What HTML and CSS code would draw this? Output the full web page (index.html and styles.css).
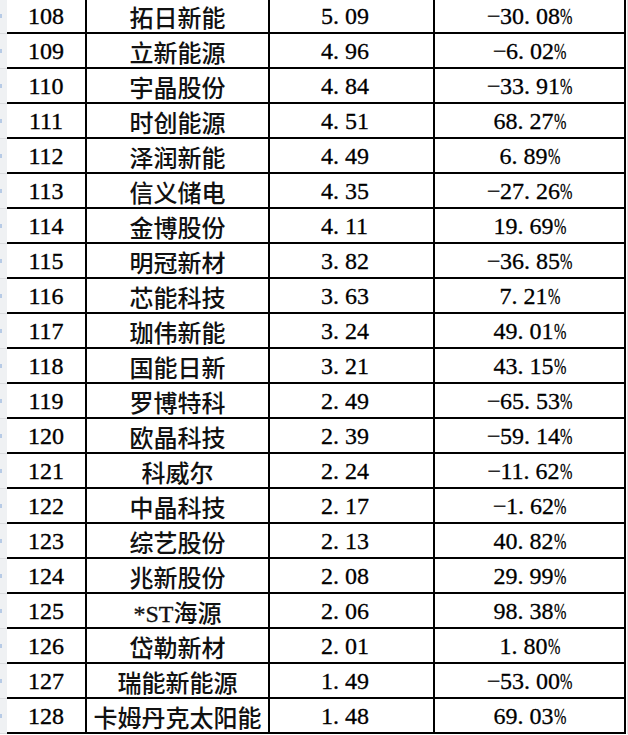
FILE: index.html
```html
<!DOCTYPE html>
<html lang="zh-CN">
<head>
<meta charset="utf-8">
<title>表格</title>
<link rel="stylesheet" href="styles.css">
</head>
<body>
<div class="sheet">
  <div class="row"><div class="hdr"></div><div class="c rank">108</div><div class="c name">拓日新能</div><div class="c val">5<i class="d">.</i>09</div><div class="c pct"><i class="m">−</i>30<i class="d">.</i>08<i class="p">%</i></div></div>
  <div class="row"><div class="hdr"></div><div class="c rank">109</div><div class="c name">立新能源</div><div class="c val">4<i class="d">.</i>96</div><div class="c pct"><i class="m">−</i>6<i class="d">.</i>02<i class="p">%</i></div></div>
  <div class="row"><div class="hdr"></div><div class="c rank">110</div><div class="c name">宇晶股份</div><div class="c val">4<i class="d">.</i>84</div><div class="c pct"><i class="m">−</i>33<i class="d">.</i>91<i class="p">%</i></div></div>
  <div class="row"><div class="hdr"></div><div class="c rank">111</div><div class="c name">时创能源</div><div class="c val">4<i class="d">.</i>51</div><div class="c pct">68<i class="d">.</i>27<i class="p">%</i></div></div>
  <div class="row"><div class="hdr"></div><div class="c rank">112</div><div class="c name">泽润新能</div><div class="c val">4<i class="d">.</i>49</div><div class="c pct">6<i class="d">.</i>89<i class="p">%</i></div></div>
  <div class="row"><div class="hdr"></div><div class="c rank">113</div><div class="c name">信义储电</div><div class="c val">4<i class="d">.</i>35</div><div class="c pct"><i class="m">−</i>27<i class="d">.</i>26<i class="p">%</i></div></div>
  <div class="row"><div class="hdr"></div><div class="c rank">114</div><div class="c name">金博股份</div><div class="c val">4<i class="d">.</i>11</div><div class="c pct">19<i class="d">.</i>69<i class="p">%</i></div></div>
  <div class="row"><div class="hdr"></div><div class="c rank">115</div><div class="c name">明冠新材</div><div class="c val">3<i class="d">.</i>82</div><div class="c pct"><i class="m">−</i>36<i class="d">.</i>85<i class="p">%</i></div></div>
  <div class="row"><div class="hdr"></div><div class="c rank">116</div><div class="c name">芯能科技</div><div class="c val">3<i class="d">.</i>63</div><div class="c pct">7<i class="d">.</i>21<i class="p">%</i></div></div>
  <div class="row"><div class="hdr"></div><div class="c rank">117</div><div class="c name">珈伟新能</div><div class="c val">3<i class="d">.</i>24</div><div class="c pct">49<i class="d">.</i>01<i class="p">%</i></div></div>
  <div class="row"><div class="hdr"></div><div class="c rank">118</div><div class="c name">国能日新</div><div class="c val">3<i class="d">.</i>21</div><div class="c pct">43<i class="d">.</i>15<i class="p">%</i></div></div>
  <div class="row"><div class="hdr"></div><div class="c rank">119</div><div class="c name">罗博特科</div><div class="c val">2<i class="d">.</i>49</div><div class="c pct"><i class="m">−</i>65<i class="d">.</i>53<i class="p">%</i></div></div>
  <div class="row"><div class="hdr"></div><div class="c rank">120</div><div class="c name">欧晶科技</div><div class="c val">2<i class="d">.</i>39</div><div class="c pct"><i class="m">−</i>59<i class="d">.</i>14<i class="p">%</i></div></div>
  <div class="row"><div class="hdr"></div><div class="c rank">121</div><div class="c name">科威尔</div><div class="c val">2<i class="d">.</i>24</div><div class="c pct"><i class="m">−</i>11<i class="d">.</i>62<i class="p">%</i></div></div>
  <div class="row"><div class="hdr"></div><div class="c rank">122</div><div class="c name">中晶科技</div><div class="c val">2<i class="d">.</i>17</div><div class="c pct"><i class="m">−</i>1<i class="d">.</i>62<i class="p">%</i></div></div>
  <div class="row"><div class="hdr"></div><div class="c rank">123</div><div class="c name">综艺股份</div><div class="c val">2<i class="d">.</i>13</div><div class="c pct">40<i class="d">.</i>82<i class="p">%</i></div></div>
  <div class="row"><div class="hdr"></div><div class="c rank">124</div><div class="c name">兆新股份</div><div class="c val">2<i class="d">.</i>08</div><div class="c pct">29<i class="d">.</i>99<i class="p">%</i></div></div>
  <div class="row"><div class="hdr"></div><div class="c rank">125</div><div class="c name"><span class="lat">*ST</span>海源</div><div class="c val">2<i class="d">.</i>06</div><div class="c pct">98<i class="d">.</i>38<i class="p">%</i></div></div>
  <div class="row"><div class="hdr"></div><div class="c rank">126</div><div class="c name">岱勒新材</div><div class="c val">2<i class="d">.</i>01</div><div class="c pct">1<i class="d">.</i>80<i class="p">%</i></div></div>
  <div class="row"><div class="hdr"></div><div class="c rank">127</div><div class="c name">瑞能新能源</div><div class="c val">1<i class="d">.</i>49</div><div class="c pct"><i class="m">−</i>53<i class="d">.</i>00<i class="p">%</i></div></div>
  <div class="row"><div class="hdr"></div><div class="c rank">128</div><div class="c name">卡姆丹克太阳能</div><div class="c val">1<i class="d">.</i>48</div><div class="c pct">69<i class="d">.</i>03<i class="p">%</i></div></div>
</div>
</body>
</html>
```
FILE: styles.css
```css
* { box-sizing: border-box; }
html, body {
  margin: 0;
  padding: 0;
  background: #ffffff;
  overflow: hidden;
}
.sheet {
  margin-top: -1px;
  width: 628px;
  border-right: 1px solid #e2e2e2;
}
.row {
  display: grid;
  grid-template-columns: 7px 80px 183px 165px 191px;
  height: 35px;
}
.hdr {
  background: #eff1f3;
  border-bottom: 1px solid #d9dbde;
  position: relative;
}
.hdr::before {
  content: "";
  position: absolute;
  left: 0;
  top: 15px;
  width: 2px;
  height: 4px;
  background: #b7cbe6;
}
.c {
  height: 35px;
  border-right: 2px solid #000;
  border-bottom: 2px solid #000;
  padding-top: 2px;
  line-height: 31px;
  font-size: 24px;
  color: #000;
  white-space: nowrap;
}
.rank {
  font-family: "Liberation Serif", serif;
  text-align: center;
  -webkit-text-stroke: 0.35px #000;
}
.name {
  font-family: "Noto Sans CJK SC", sans-serif;
  font-weight: 500;
  text-align: center;
  color: #111;
}
.lat {
  font-family: "Liberation Serif", "Noto Sans CJK SC", serif;
  -webkit-text-stroke: 0.3px #111;
}
.val, .pct {
  font-family: "Liberation Serif", serif;
  -webkit-text-stroke: 0.3px #000;
}
.val {
  text-align: left;
  padding-left: 51px;
}
.pct {
  text-align: center;
}
.d, .p, .m {
  font-style: normal;
  display: inline-block;
  width: 12px;
  text-align: left;
}
.p {
  transform: scaleX(0.62);
  transform-origin: left center;
}
.m {
  width: 13px;
}
```
